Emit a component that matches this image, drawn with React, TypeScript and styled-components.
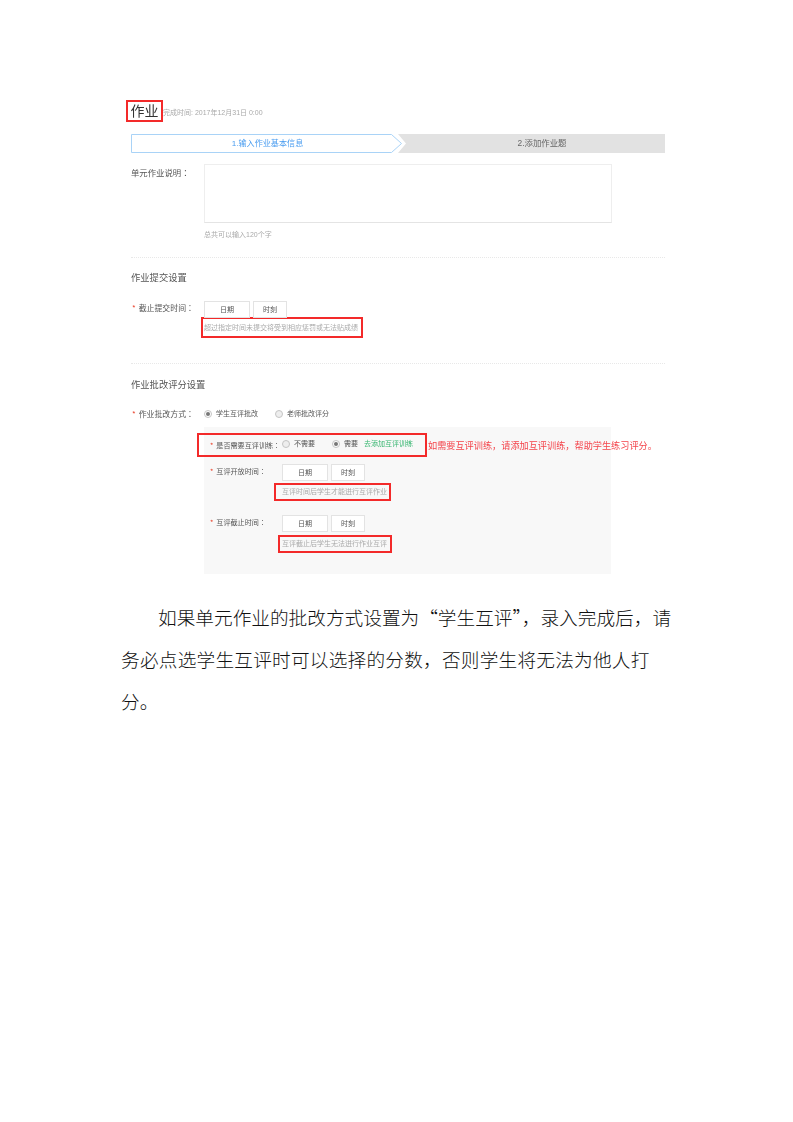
import styled, { createGlobalStyle } from "styled-components";

const GlobalStyle = createGlobalStyle`
  html, body {
    margin: 0;
    background: #fff;
    font-family: "Liberation Sans", "Noto Sans CJK SC", sans-serif;
  }
`;

const Sheet = styled.div`
  height: 1122px;
  padding-top: 100px;
  box-sizing: border-box;
  overflow: hidden;
`;

const Form = styled.div`
  width: 534px;
  margin-left: 131px;
  font-size: 7px;
  line-height: 12px;
  color: #555;
  filter: blur(0.4px);
`;

const TitleRow = styled.div`
  display: flex;
  align-items: flex-end;
  height: 22px;
  margin-left: -5px;
`;

const Title = styled.h1`
  width: 37px;
  height: 22px;
  box-sizing: border-box;
  margin: 0;
  border: 2px solid #f32a2a;
  font-size: 14px;
  font-weight: 400;
  line-height: 18px;
  text-align: center;
  color: #333;
`;

const Deadline = styled.span`
  margin-bottom: 3px;
  color: #aaa;
  font-size: 7px;
  white-space: nowrap;
`;

const Steps = styled.div`
  position: relative;
  display: flex;
  height: 19px;
  margin-top: 12px;
  line-height: 19px;
  font-size: 8px;
`;

const StepArt = styled.svg`
  position: absolute;
  inset: 0;
`;

const Step = styled.div<{ $active?: boolean }>`
  position: relative;
  flex: ${(p) => (p.$active ? "0 0 271px" : "1")};
  padding-left: ${(p) => (p.$active ? "1px" : "16px")};
  font-size: ${(p) => (p.$active ? "8.1px" : "8.4px")};
  text-align: center;
  color: ${(p) => (p.$active ? "#4a9df0" : "#666")};
`;

const Field = styled.div<{ $top?: number }>`
  display: flex;
  margin-top: ${(p) => p.$top ?? 0}px;
  align-items: flex-start;
`;

const Label = styled.div<{ $width?: number }>`
  flex: 0 0 ${(p) => p.$width ?? 73}px;
  box-sizing: border-box;
  padding-top: 1px;
  font-family: "Noto Sans CJK TC", "Liberation Sans", sans-serif;
  font-size: 7.9px;
  white-space: nowrap;
`;

const DescLabel = styled(Label)`
  padding-top: 2px;
  font-size: 8.4px;
`;

const StarLabel = styled(Label)<{ $inset?: number }>`
  padding-left: ${(p) => p.$inset ?? 1}px;
  &::before {
    content: "*";
    color: #e9432c;
    margin-right: 3px;
  }
`;

const PanelLabel = styled(StarLabel)`
  font-size: 7.1px;
`;

const TextBox = styled.div`
  width: 408px;
  height: 59px;
  box-sizing: border-box;
  background: #fff;
  border: 1px solid #eee;
  border-bottom-color: #e4e4e4;
`;

const Hint = styled.div`
  margin: 6px 0 0 73px;
  color: #aaa;
`;

const Divider = styled.div<{ $top: number }>`
  margin-top: ${(p) => p.$top}px;
  border-top: 1px dotted #e8e8e8;
`;

const Heading = styled.h2<{ $top: number }>`
  margin: ${(p) => p.$top}px 0 0;
  font-size: 9.3px;
  font-weight: 400;
  line-height: 12px;
  color: #555;
`;

const Pickers = styled.div`
  display: flex;
  gap: 3px;
`;

const Picker = styled.div<{ $wide?: boolean }>`
  width: ${(p) => (p.$wide ? 46 : 34)}px;
  height: 17px;
  box-sizing: border-box;
  border: 1px solid #e3e3e3;
  background: #fff;
  line-height: 15px;
  text-align: center;
  color: #555;
`;

const Note = styled.div<{ $left: number; $width: number; $height: number; $top: number; $pad: number }>`
  width: ${(p) => p.$width}px;
  height: ${(p) => p.$height}px;
  box-sizing: border-box;
  margin: ${(p) => p.$top}px 0 0 ${(p) => p.$left}px;
  padding-left: ${(p) => p.$pad}px;
  border: 2px solid #f32a2a;
  font-size: 7px;
  line-height: ${(p) => p.$height - 4}px;
  color: #aaa;
  white-space: nowrap;
`;

const Options = styled.div`
  display: flex;
  align-items: center;
  height: 13px;
`;

const Radio = styled.span<{ $on?: boolean }>`
  display: inline-flex;
  align-items: center;
  justify-content: center;
  flex: none;
  width: 8px;
  height: 8px;
  box-sizing: border-box;
  border-radius: 50%;
  border: 1px solid #c4c4c4;
  background: ${(p) => (p.$on ? "#fff" : "#eee")};
  margin-right: 4px;
  &::after {
    content: "";
    display: ${(p) => (p.$on ? "block" : "none")};
    width: 4px;
    height: 4px;
    border-radius: 50%;
    background: #777;
  }
`;

const Option = styled.span<{ $gap?: number }>`
  margin-right: ${(p) => p.$gap ?? 0}px;
  white-space: nowrap;
`;

const Panel = styled.div`
  width: 407px;
  height: 147px;
  box-sizing: border-box;
  margin: 7px 0 0 73px;
  padding-top: 6px;
  background: #f8f8f8;
`;

const TrainingRow = styled.div`
  display: flex;
  align-items: center;
  margin-left: -7px;
`;

const TrainingBox = styled.div`
  display: flex;
  align-items: center;
  flex: none;
  width: 230px;
  height: 24px;
  box-sizing: border-box;
  border: 2px solid #f32a2a;
  padding: 0 0 2px 11px;
`;

const TrainingLink = styled.span`
  margin-left: 6px;
  color: #35b56f;
  white-space: nowrap;
`;

const Warning = styled.span`
  margin: 1px 0 0 1px;
  font-size: 9.16px;
  color: #f4434a;
  white-space: nowrap;
`;

const Paragraph = styled.div`
  width: 560px;
  margin: 22px 0 0 121px;
  font-family: "Noto Sans CJK SC", "Liberation Serif", serif;
  font-size: 18.67px;
  font-weight: 300;
  line-height: 42px;
  color: #111;
`;

const Line = styled.div<{ $indent?: number; $spacing?: number }>`
  padding-left: ${(p) => p.$indent ?? 0}px;
  letter-spacing: ${(p) => p.$spacing ?? 0}px;
  white-space: nowrap;
`;

function Picks() {
  return (
    <Pickers>
      <Picker $wide>日期</Picker>
      <Picker>时刻</Picker>
    </Pickers>
  );
}

export default function App() {
  return (
    <Sheet>
      <GlobalStyle />
      <Form>
        <TitleRow>
          <Title>作业</Title>
          <Deadline>完成时间: 2017年12月31日 0:00</Deadline>
        </TitleRow>

        <Steps>
          <StepArt width="534" height="19" viewBox="0 0 534 19">
            <path d="M267 0H534V19H267L275 9.5Z" fill="#e2e2e2" />
            <path d="M0.5 0.5H260.5L270.5 9.5L260.5 18.5H0.5Z" fill="#fff" stroke="#a9d3f7" />
          </StepArt>
          <Step $active>1.输入作业基本信息</Step>
          <Step>2.添加作业题</Step>
        </Steps>

        <Field $top={11}>
          <DescLabel>单元作业说明：</DescLabel>
          <TextBox />
        </Field>
        <Hint>总共可以输入120个字</Hint>

        <Divider $top={16} />
        <Heading $top={14}>作业提交设置</Heading>

        <Field $top={17}>
          <StarLabel>截止提交时间：</StarLabel>
          <Picks />
        </Field>
        <Note $left={70} $top={-1} $width={162} $height={21} $pad={1}>
          超过指定时间未提交将受到相应惩罚或无法贴成绩
        </Note>

        <Divider $top={25} />
        <Heading $top={15}>作业批改评分设置</Heading>

        <Field $top={16}>
          <StarLabel>作业批改方式：</StarLabel>
          <Options>
            <Radio $on />
            <Option $gap={17}>学生互评批改</Option>
            <Radio />
            <Option>老师批改评分</Option>
          </Options>
        </Field>

        <Panel>
          <TrainingRow>
            <TrainingBox>
              <PanelLabel $inset={0} $width={72}>是否需要互评训练：</PanelLabel>
              <Radio />
              <Option $gap={17}>不需要</Option>
              <Radio $on />
              <Option>需要</Option>
              <TrainingLink>去添加互评训练</TrainingLink>
            </TrainingBox>
            <Warning>如需要互评训练，请添加互评训练，帮助学生练习评分。</Warning>
          </TrainingRow>

          <Field $top={7}>
            <PanelLabel $inset={6} $width={78}>互评开放时间：</PanelLabel>
            <Picks />
          </Field>
          <Note $left={70} $top={2} $width={117} $height={18} $pad={6}>
            互评时间后学生才能进行互评作业
          </Note>

          <Field $top={14}>
            <PanelLabel $inset={6} $width={78}>互评截止时间：</PanelLabel>
            <Picks />
          </Field>
          <Note $left={74} $top={3} $width={114} $height={18} $pad={2}>
            互评截止后学生无法进行作业互评
          </Note>
        </Panel>
      </Form>

      <Paragraph>
        <Line $indent={37}>如果单元作业的批改方式设置为“学生互评”，录入完成后，请</Line>
        <Line $spacing={0.22}>务必点选学生互评时可以选择的分数，否则学生将无法为他人打</Line>
        <Line>分。</Line>
      </Paragraph>
    </Sheet>
  );
}
